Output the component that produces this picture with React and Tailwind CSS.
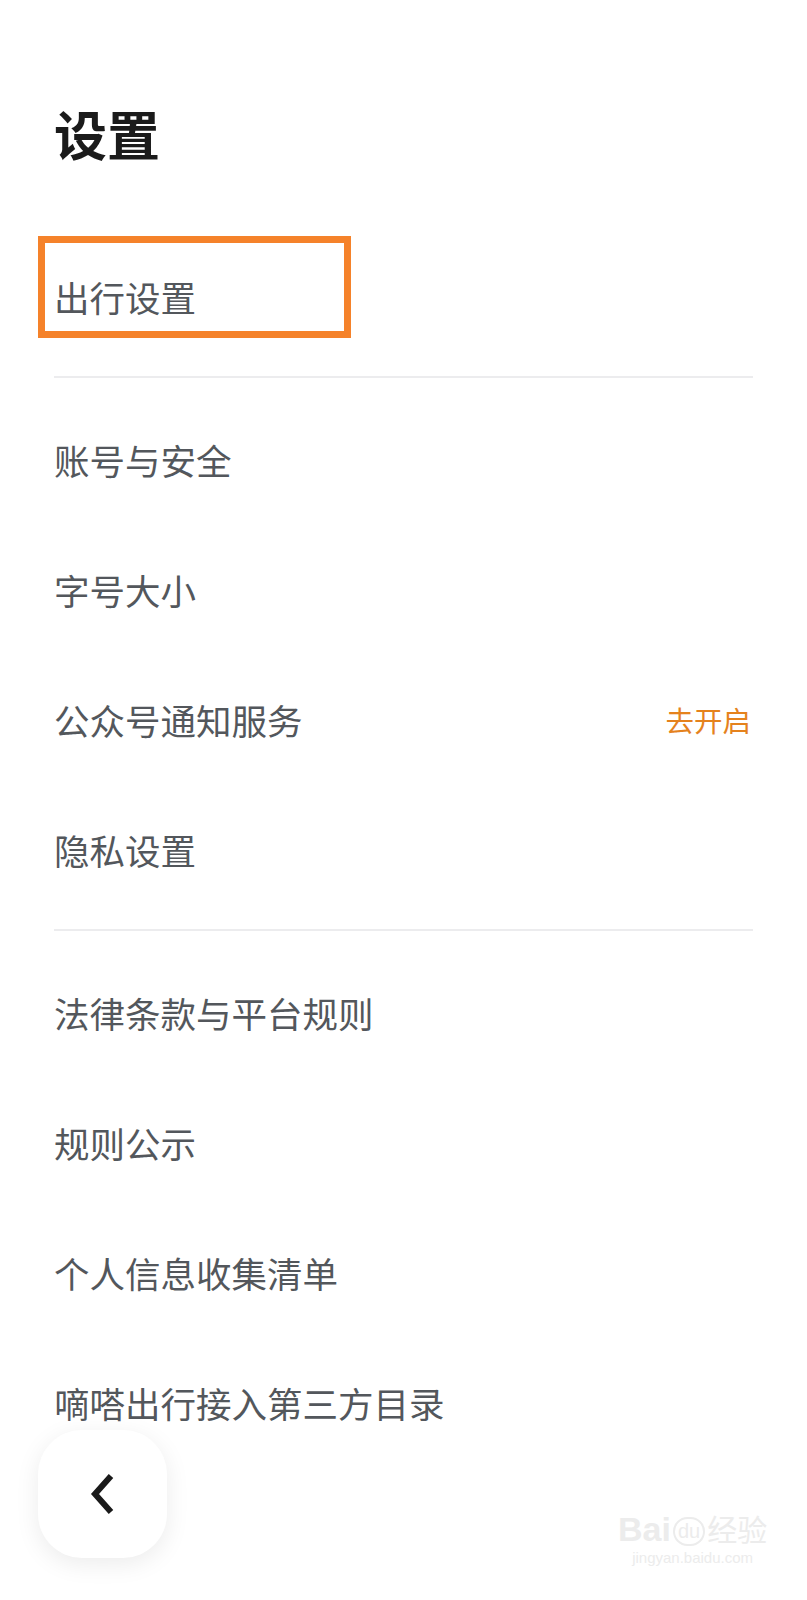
import React from "react";

const font = { fontFamily: '"Noto Sans CJK SC", "Noto Sans", sans-serif' };

function Row({ label, extra, children }) {
  return (
    <div className="relative flex h-[130px] items-center justify-between pl-[54px] pr-[56px]">
      <span className="text-[35.5px] text-[#53575c]">{label}</span>
      {extra && <span className="text-[28.5px] text-[#e5821d]">{extra}</span>}
      {children}
    </div>
  );
}

function Divider() {
  return (
    <div className="flex h-[33px] items-start pt-[14px] pl-[54px] pr-[54px]">
      <div className="h-[2px] w-full bg-[#ececee]" />
    </div>
  );
}

export default function App() {
  const groupA = ["账号与安全", "字号大小", "公众号通知服务", "隐私设置"];
  const groupB = ["法律条款与平台规则", "规则公示", "个人信息收集清单", "嘀嗒出行接入第三方目录"];

  return (
    <div className="relative h-[1600px] w-[807px] overflow-hidden bg-white" style={font}>
      <div className="pt-[107px] pl-[54px]">
        <h1 className="text-[53px] leading-none font-bold text-[#1b1b1b]">设置</h1>
      </div>

      <div className="mt-[72px]">
        <Row label="出行设置">
          {/* annotation box */}
          <div className="absolute left-[38px] top-[4px] h-[102px] w-[313px] border-[7px] border-[#f5822a]" />
        </Row>
      </div>

      <Divider />
      {groupA.map((t) => (
        <Row key={t} label={t} extra={t === "公众号通知服务" ? "去开启" : null} />
      ))}
      <Divider />
      {groupB.map((t) => (
        <Row key={t} label={t} />
      ))}

      {/* floating back button */}
      <button className="absolute left-[38px] top-[1430px] flex h-[128px] w-[129px] items-center justify-center rounded-[44px] bg-white shadow-[0_6px_24px_rgba(0,0,0,0.08)]">
        <svg width="26" height="42" viewBox="0 0 26 42" fill="none">
          <path d="M21 3 L5 21 L21 39" stroke="#1a1a1a" strokeWidth="6" strokeLinejoin="miter" />
        </svg>
      </button>

      {/* watermark */}
      <div className="absolute left-[618px] top-[1512px] flex flex-col items-center text-[#ececec]" style={{ fontFamily: '"Liberation Sans", "Noto Sans CJK SC", sans-serif' }}>
        <div className="flex items-end">
          <span className="text-[34px] leading-none font-bold">Bai</span>
          <span className="mx-[2px] rounded-full border-2 border-[#ececec] px-[3px] text-[20px] leading-tight">du</span>
          <span className="text-[30px] leading-none">经验</span>
        </div>
        <span className="mt-[4px] text-[15px] leading-none">jingyan.baidu.com</span>
      </div>
    </div>
  );
}
